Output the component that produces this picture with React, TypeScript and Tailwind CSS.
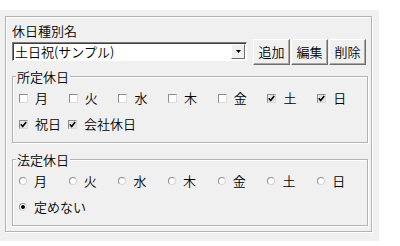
const days = ["月", "火", "水", "木", "金", "土", "日"];
const fixedDays = [false, false, false, false, false, true, true];

function CheckBox({ checked }: { checked: boolean }) {
  return (
    <span
      className={`relative flex h-[9px] w-[9px] shrink-0 items-center justify-center border border-t-[#8d8d8d] border-l-[#8d8d8d] border-b-[#dadada] border-r-[#dadada] ${
        checked ? "bg-[#e4e4e4]" : "bg-white"
      }`}
    >
      {checked && (
        <svg width="7" height="7" viewBox="0 0 7 7">
          <path d="M0.8 3.2 L2.7 5.4 L6.2 1" stroke="#000" strokeWidth="1.6" fill="none" />
        </svg>
      )}
    </span>
  );
}

function Radio({ checked }: { checked: boolean }) {
  return (
    <span className="flex h-[8px] w-[8px] shrink-0 items-center justify-center rounded-full border border-t-[#8f8f8f] border-l-[#8f8f8f] border-b-[#d6d6d6] border-r-[#d6d6d6] bg-white">
      {checked && <span className="h-[4px] w-[4px] rounded-full bg-black" />}
    </span>
  );
}

function Item({ children, label }: { children: React.ReactNode; label: string }) {
  return (
    <label className="flex h-[18px] items-center gap-[7px]">
      {children}
      <span>{label}</span>
    </label>
  );
}

function Group({ title, children }: { title: string; children: React.ReactNode }) {
  return (
    <fieldset className="w-[352px] border border-[#b3b3b3] shadow-[inset_1px_1px_0_#fff,1px_1px_0_#fff]">
      <legend className="ml-[3px] bg-[#f0f0f0] px-[1px] leading-[15px]">{title}</legend>
      <div className="flex flex-col gap-[8px] pb-[9px] pl-[6px] pt-[5px]">{children}</div>
    </fieldset>
  );
}

function Button({ label }: { label: string }) {
  return (
    <button className="flex h-[26px] w-[37px] items-center justify-center border border-t-white border-l-white border-b-[#6e6e6e] border-r-[#6e6e6e] bg-[#f0f0f0] shadow-[inset_-1px_-1px_0_#a8a8a8] leading-[15px]">
      {label}
    </button>
  );
}

export default function App() {
  return (
    <div className="h-[246px] w-[400px] bg-white font-['Noto_Sans_CJK_JP',sans-serif] text-[13px] font-[350] text-black">
      <div className="mt-[10px] h-[231px] w-[379px] bg-[#f0f0f0] pl-[5px] pt-[6px]">
        <div className="h-[216px] w-[367px] border border-[#b3b3b3] pl-[6px] pt-[6px] shadow-[inset_1px_1px_0_#fff,1px_1px_0_#fff]">
          <div className="leading-[15px]">休日種別名</div>

          <div className="flex h-[27px] items-center">
            <div className="flex h-[19px] w-[235px] items-center border border-t-[#7a7a7a] border-l-[#7a7a7a] border-b-white border-r-white bg-white shadow-[inset_1px_1px_0_#404040]">
              <span className="flex-1 pl-[2px] leading-[15px]">土日祝(サンプル)</span>
              <span className="mr-[1px] flex h-[15px] w-[14px] items-center justify-center border border-t-white border-l-white border-b-[#6e6e6e] border-r-[#6e6e6e] bg-[#f0f0f0]">
                <svg width="5" height="3" viewBox="0 0 5 3">
                  <path d="M0 0 H5 L2.5 3 Z" fill="#000" />
                </svg>
              </span>
            </div>
            <div className="ml-[6px] flex gap-[1px]">
              <Button label="追加" />
              <Button label="編集" />
              <Button label="削除" />
            </div>
          </div>

          <div className="mt-[4px]">
            <Group title="所定休日">
              <div className="flex">
                {days.map((d, i) => (
                  <div key={d} className="w-[49.7px]">
                    <Item label={d}>
                      <CheckBox checked={fixedDays[i]} />
                    </Item>
                  </div>
                ))}
              </div>
              <div className="flex gap-[7px]">
                <Item label="祝日">
                  <CheckBox checked />
                </Item>
                <Item label="会社休日">
                  <CheckBox checked />
                </Item>
              </div>
            </Group>
          </div>

          <div className="mt-[9px]">
            <Group title="法定休日">
              <div className="flex">
                {days.map((d) => (
                  <div key={d} className="w-[49.7px]">
                    <Item label={d}>
                      <Radio checked={false} />
                    </Item>
                  </div>
                ))}
              </div>
              <Item label="定めない">
                <Radio checked />
              </Item>
            </Group>
          </div>
        </div>
      </div>
    </div>
  );
}
